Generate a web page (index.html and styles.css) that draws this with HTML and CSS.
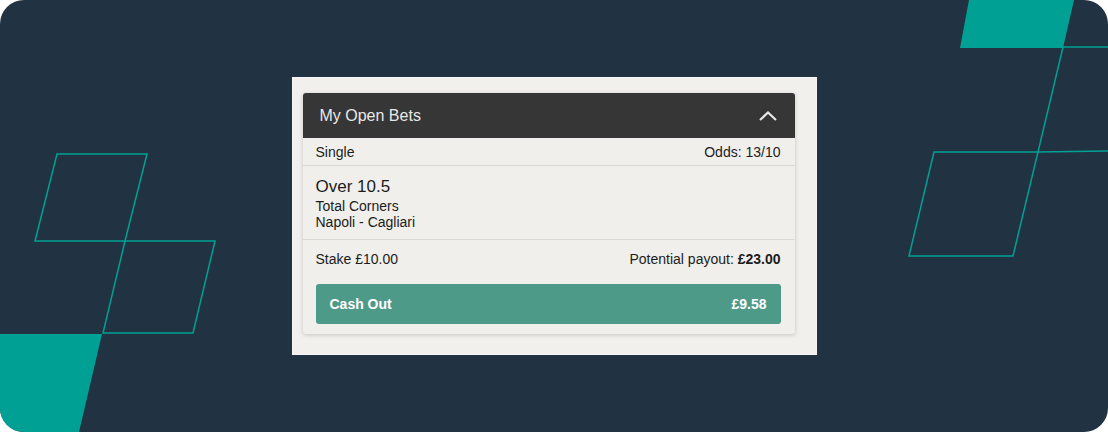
FILE: index.html
```html
<!DOCTYPE html>
<html lang="en">

<head>
    <meta charset="UTF-8">
    <title>My Open Bets</title>
    <link rel="stylesheet" href="styles.css">
</head>

<body>
    <div class="canvas">
        <svg class="deco" width="1108" height="432" viewBox="0 0 1108 432">
            <polygon points="57,154 147,154 125,241 35,241" fill="none" stroke="#00a194" stroke-width="1.5"/>
            <polygon points="125,241 215,241 193,333 103,333" fill="none" stroke="#00a194" stroke-width="1.5"/>
            <polygon points="0,334 102,334 79,432 0,432" fill="#00a194"/>
            <polygon points="969,0 1074,0 1063,48 960,48" fill="#00a194"/>
            <polyline points="1110,47 1063,47 1038,152 1110,151" fill="none" stroke="#00a194" stroke-width="1.5"/>
            <polygon points="934,152 1038,152 1013,256 909,256" fill="none" stroke="#00a194" stroke-width="1.5"/>
        </svg>

        <div class="panel">
            <div class="card">
                <div class="card-head">
                    <span>My Open Bets</span>
                    <svg width="18" height="10" viewBox="0 0 18 10">
                        <polyline points="1,9 9,1.5 17,9" fill="none" stroke="#e8e8e8" stroke-width="2.2"/>
                    </svg>
                </div>
                <div class="row type-row">
                    <span>Single</span>
                    <span>Odds: 13/10</span>
                </div>
                <div class="selection">
                    <div class="sel-name">Over 10.5</div>
                    <div>Total Corners</div>
                    <div>Napoli - Cagliari</div>
                </div>
                <div class="row stake-row">
                    <span>Stake £10.00</span>
                    <span>Potential payout: <b>£23.00</b></span>
                </div>
                <div class="cashout">
                    <span>Cash Out</span>
                    <span>£9.58</span>
                </div>
            </div>
        </div>
    </div>
</body>

</html>
```

FILE: styles.css
```css
html,body,div,span{margin:0;padding:0;}
body{background:#fff;font-family:"Liberation Sans",Arial,sans-serif;}
.canvas{position:relative;width:1108px;height:432px;border-radius:24px;overflow:hidden;background:#213343;display:flex;align-items:center;justify-content:center;}
.deco{position:absolute;left:0;top:0;}
.panel{position:relative;background:#f1f0ec;padding:15px 21px 20px 10px;border:1px solid #f6f5f2;}
.card{width:492px;background:#f0efeb;box-shadow:0 1px 4px rgba(0,0,0,0.18);border-radius:3px;color:#1c1c1c;padding-bottom:10px;}
.card-head{height:45px;background:#363636;border-radius:3px 3px 0 0;display:flex;align-items:center;justify-content:space-between;padding:0 18px 0 17px;color:#e8e8e8;font-size:16px;}
.row{display:flex;justify-content:space-between;align-items:center;padding:0 14px 0 13px;font-size:14px;}
.type-row{height:27px;border-bottom:1px solid #dad9d5;}
.selection{padding:10px 13px 9px;font-size:14px;line-height:16px;border-bottom:1px solid #dad9d5;}
.selection .sel-name{font-size:17px;line-height:22px;}
.stake-row{height:38px;}
.stake-row b{font-weight:bold;}
.cashout{margin:6px 14px 0 13px;height:40px;border-radius:3px;background:#4e9a88;color:#fff;font-weight:bold;font-size:14px;display:flex;align-items:center;justify-content:space-between;padding:0 14px;}
```
